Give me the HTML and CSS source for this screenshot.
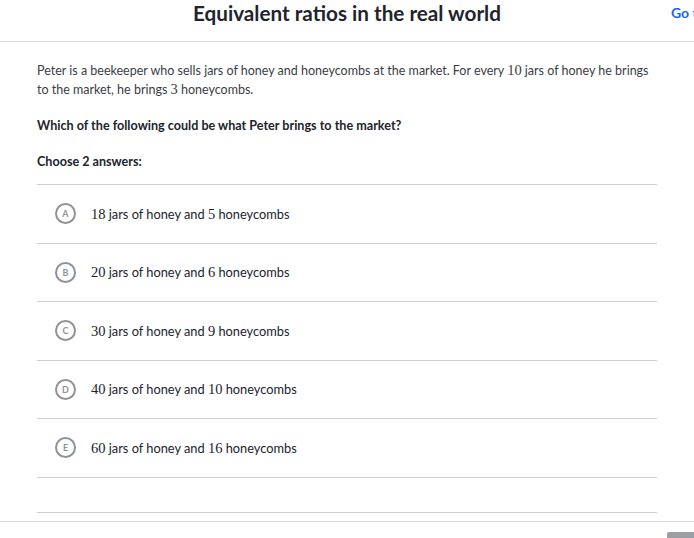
FILE: index.html
```html
<!DOCTYPE html>
<html>
<head>
<meta charset="utf-8">
<link rel="stylesheet" href="styles.css">
</head>
<body>
<header class="top">
  <h1 class="title">Equivalent ratios in the real world</h1>
  <a class="go">Go to</a>
</header>
<main class="content">
  <p class="intro">Peter is a beekeeper who sells jars of honey and honeycombs at the market. For every <span class="m">10</span> jars of honey he brings to the market, he brings <span class="m">3</span> honeycombs.</p>
  <p class="q">Which of the following could be what Peter brings to the market?</p>
  <p class="q choose">Choose 2 answers:</p>
  <ul class="opts">
    <li class="opt"><span class="ltr">A</span><span class="txt"><span class="m">18</span> jars of honey and <span class="m">5</span> honeycombs</span></li>
    <li class="opt"><span class="ltr">B</span><span class="txt"><span class="m">20</span> jars of honey and <span class="m">6</span> honeycombs</span></li>
    <li class="opt"><span class="ltr">C</span><span class="txt"><span class="m">30</span> jars of honey and <span class="m">9</span> honeycombs</span></li>
    <li class="opt"><span class="ltr">D</span><span class="txt"><span class="m">40</span> jars of honey and <span class="m">10</span> honeycombs</span></li>
    <li class="opt"><span class="ltr">E</span><span class="txt"><span class="m">60</span> jars of honey and <span class="m">16</span> honeycombs</span></li>
  </ul>
  <div class="tail"></div>
</main>
<footer class="bottom"><span class="btn"></span></footer>
</body>
</html>
```
FILE: styles.css
```css
html, body { margin: 0; padding: 0; background: #fff; overflow: hidden; }
body { width: 694px; height: 538px; font-family: Lato, "Noto Sans", sans-serif; color: #21242c; }
.top { height: 41px; border-bottom: 1px solid #dcdcdc; display: flex; justify-content: center; position: relative; }
.title { margin: 0; font-size: 20.7px; font-weight: 700; line-height: 26px; color: #21242c; }
.go { position: absolute; left: 671px; top: 4px; font-size: 14px; font-weight: 700; color: #1865f2; white-space: nowrap; }
.content { margin: 0 37px; padding-top: 19px; }
.intro { margin: 0; font-size: 12.5px; line-height: 19px; color: #3b3d45; }
.m { font-family: "Liberation Serif", "DejaVu Serif", serif; font-size: 14.5px; line-height: 1; }
.q { margin: 17px 0 0; font-size: 12.6px; font-weight: 700; line-height: 19px; color: #21242c; }
.choose { margin-top: 17px; }
.opts { list-style: none; margin: 13px 0 0; padding: 0; border-top: 1px solid #cfd0d2; }
.opt { height: 57.5px; border-bottom: 1px solid #cfd0d2; display: flex; align-items: center; padding-left: 18px; }
.ltr { flex: none; width: 21px; height: 21px; box-sizing: border-box; border: 2px solid #909296; border-radius: 50%; display: flex; align-items: center; justify-content: center; font-size: 9px; font-weight: 700; color: #909296; margin-right: 15px; }
.txt { font-size: 12.8px; color: #21242c; }
.tail { height: 34px; border-bottom: 1px solid #cfd0d2; }
.bottom { margin-top: 8px; border-top: 1px solid #d6d6d6; height: 20px; position: relative; }
.btn { position: absolute; left: 667px; top: 10px; width: 27px; height: 10px; background: #9b9ea3; border-radius: 2px 0 0 0; }
```
